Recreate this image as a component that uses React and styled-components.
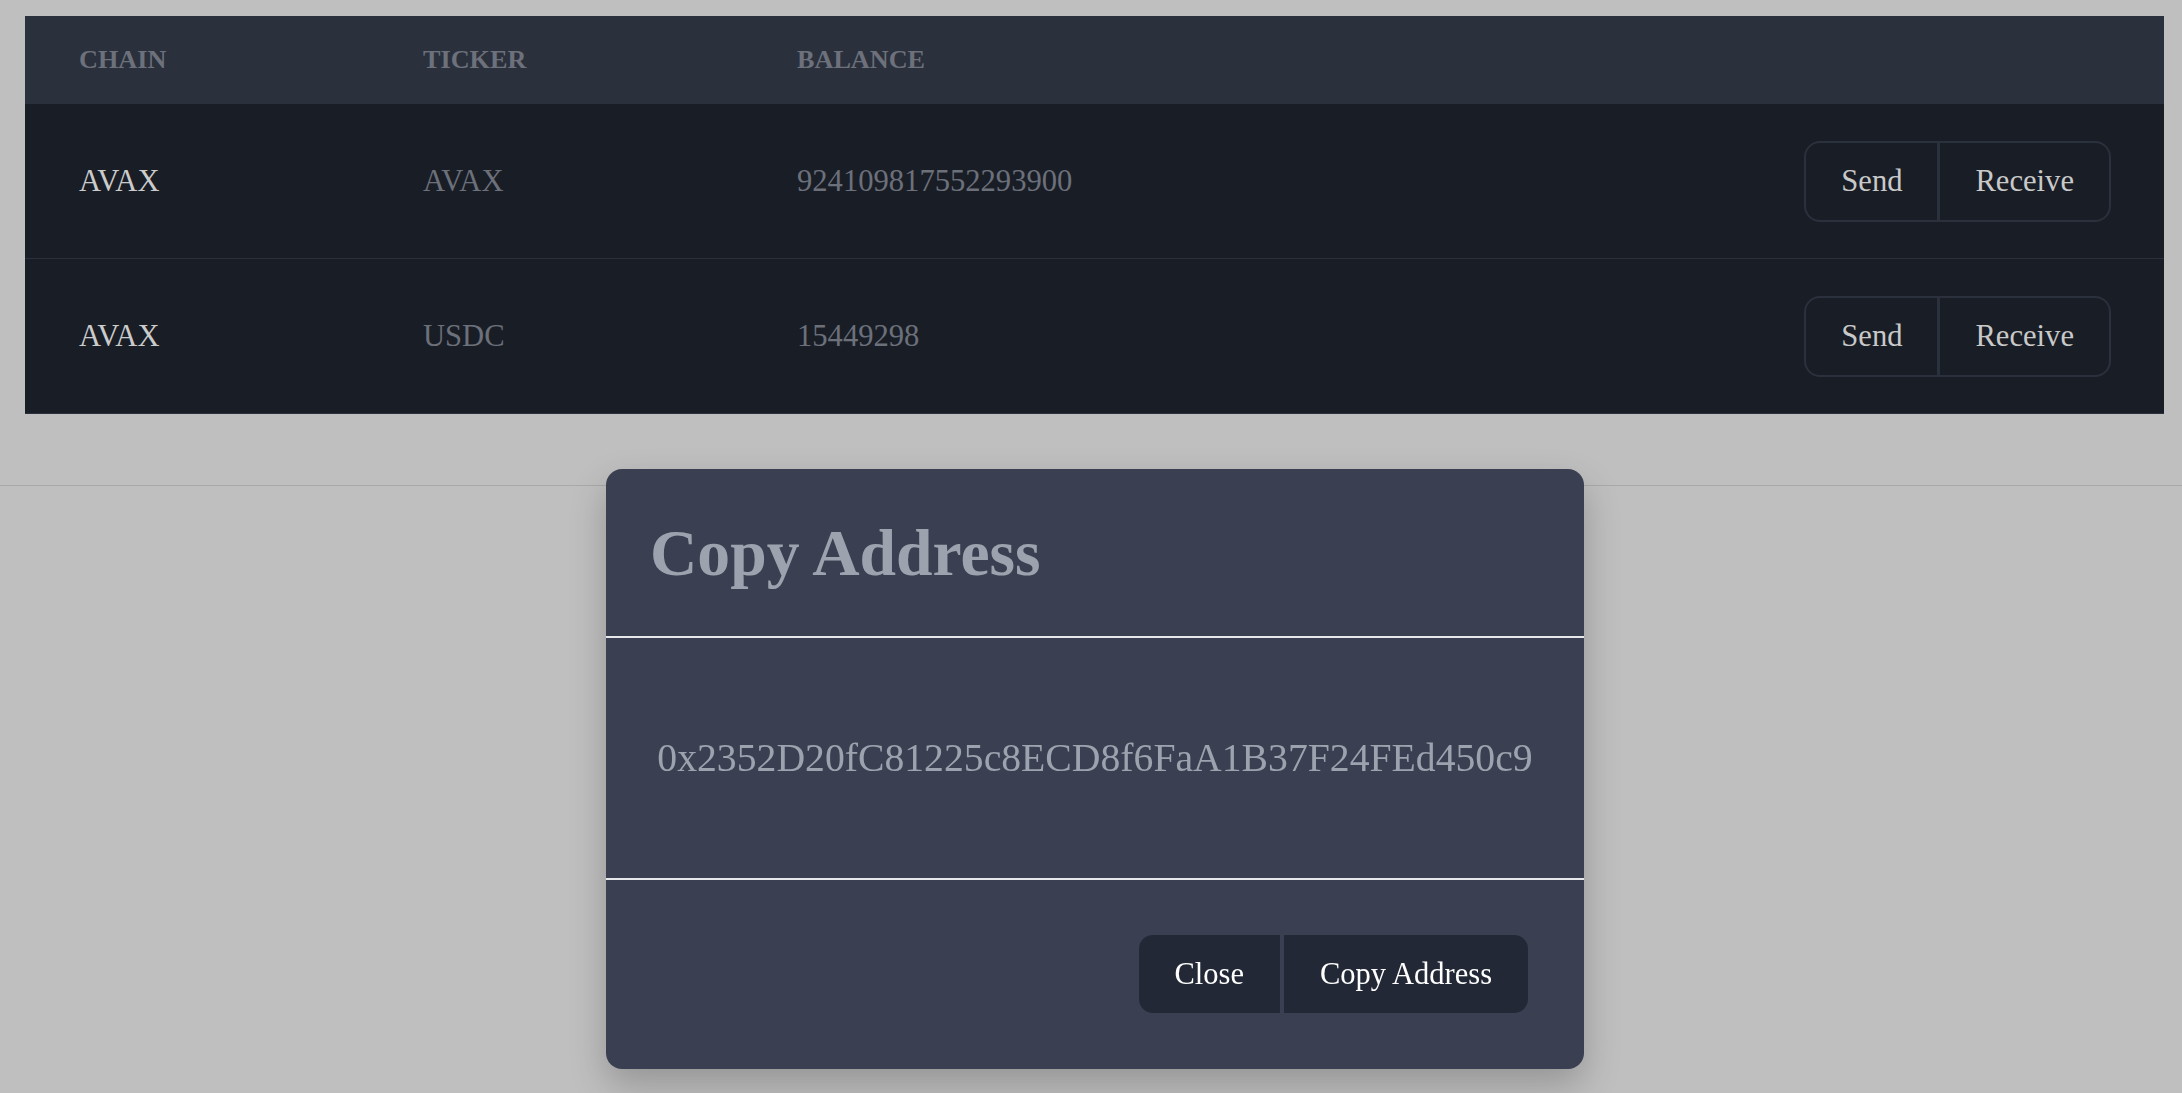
import React from 'react'
import styled, { createGlobalStyle } from 'styled-components';

const GlobalStyle = createGlobalStyle`
    html, body {
        margin: 0;
        padding: 0;
        background: #bfbfbf;
        font-family: "Liberation Serif", "Times New Roman", serif;
    }
`;

const Page = styled.header`
    position: relative;
    z-index: 1;
    display: block;
    height: 486px;
    box-sizing: border-box;
    padding: 16px 18px 0 25px;
    background: #bfbfbf;
    border-bottom: 1px solid #a9a9a9;
    box-shadow: 0 3px 6px rgba(0, 0, 0, 0.2), 0 8px 16px rgba(0, 0, 0, 0.08);
`;

const Table = styled.div`
    display: flex;
    flex-direction: column;
    background: #191e26;
`;

const Row = styled.div`
    display: grid;
    grid-template-columns: 344px 374px 1fr auto;
    align-items: center;
    padding: 0 53px 0 54px;
    height: ${p => p.head ? '88px' : '154px'};
    background: ${p => p.head ? '#2a303c' : '#191e26'};
    border-bottom: ${p => p.head ? 'none' : '1px solid #2a303c'};
`;

const HeadCell = styled.div`
    font-size: 26.2px;
    font-weight: bold;
    text-transform: uppercase;
    color: #6d717b;
`;

const Cell = styled.div`
    font-size: 30.6px;
    color: ${p => p.strong ? '#cbcbcb' : '#6c707b'};
`;

const BtnGroup = styled.div`
    display: flex;
    height: 81px;
    box-sizing: border-box;
    border: 2px solid #2a303c;
    border-radius: 16px;
    overflow: hidden;
`;

const RowBtn = styled.button`
    background: transparent;
    border: none;
    border-left: ${p => p.split ? '3px solid #2a303c' : 'none'};
    padding: 0 35px;
    font-family: inherit;
    font-size: 30.6px;
    color: #c9c9c9;
    cursor: pointer;
`;

const Overlay = styled.div`
    position: fixed;
    inset: 0;
    z-index: 10;
    display: flex;
    justify-content: center;
    align-items: flex-end;
    padding: 0 0 24px 8px;
    box-sizing: border-box;
`;

const Modal = styled.div`
    width: 978px;
    background: #3a4051;
    border-radius: 16px;
    box-shadow: 0 16px 36px rgba(0, 0, 0, 0.22);
    overflow: hidden;
`;

const ModalHead = styled.div`
    padding: 48px 44px 47px;
    border-bottom: 2px solid #e5e7eb;
`;

const Title = styled.h3`
    margin: 0;
    font-size: 65.6px;
    line-height: 72px;
    font-weight: bold;
    color: #9ca3af;
`;

const ModalBody = styled.div`
    height: 240px;
    display: flex;
    align-items: center;
    justify-content: center;
    border-bottom: 2px solid #e5e7eb;
`;

const Address = styled.p`
    margin: 0;
    font-size: 39.7px;
    color: #9ca3af;
`;

const ModalFoot = styled.div`
    display: flex;
    justify-content: flex-end;
    gap: 4px;
    padding: 55px 56px 56px;
`;

const FootBtn = styled.button`
    height: 78px;
    padding: 0 36px;
    border: none;
    background: #222836;
    color: #ffffff;
    font-family: inherit;
    font-size: 30.5px;
    border-radius: ${p => p.first ? '14px 0 0 14px' : '0 14px 14px 0'};
    cursor: pointer;
`;

const assets = [
    { chain: 'AVAX', ticker: 'AVAX', balance: '924109817552293900' },
    { chain: 'AVAX', ticker: 'USDC', balance: '15449298' },
];

function App() {
    return (
        <>
            <GlobalStyle />
            <Page>
                <Table>
                    <Row head>
                        <HeadCell>Chain</HeadCell>
                        <HeadCell>Ticker</HeadCell>
                        <HeadCell>Balance</HeadCell>
                        <div />
                    </Row>
                    {assets.map((a, i) => (
                        <Row key={i}>
                            <Cell strong>{a.chain}</Cell>
                            <Cell>{a.ticker}</Cell>
                            <Cell>{a.balance}</Cell>
                            <BtnGroup>
                                <RowBtn>Send</RowBtn>
                                <RowBtn split>Receive</RowBtn>
                            </BtnGroup>
                        </Row>
                    ))}
                </Table>
            </Page>

            <Overlay>
                <Modal>
                    <ModalHead>
                        <Title>Copy Address</Title>
                    </ModalHead>
                    <ModalBody>
                        <Address>0x2352D20fC81225c8ECD8f6FaA1B37F24FEd450c9</Address>
                    </ModalBody>
                    <ModalFoot>
                        <FootBtn first>Close</FootBtn>
                        <FootBtn>Copy Address</FootBtn>
                    </ModalFoot>
                </Modal>
            </Overlay>
        </>
    )
}

export default App;
